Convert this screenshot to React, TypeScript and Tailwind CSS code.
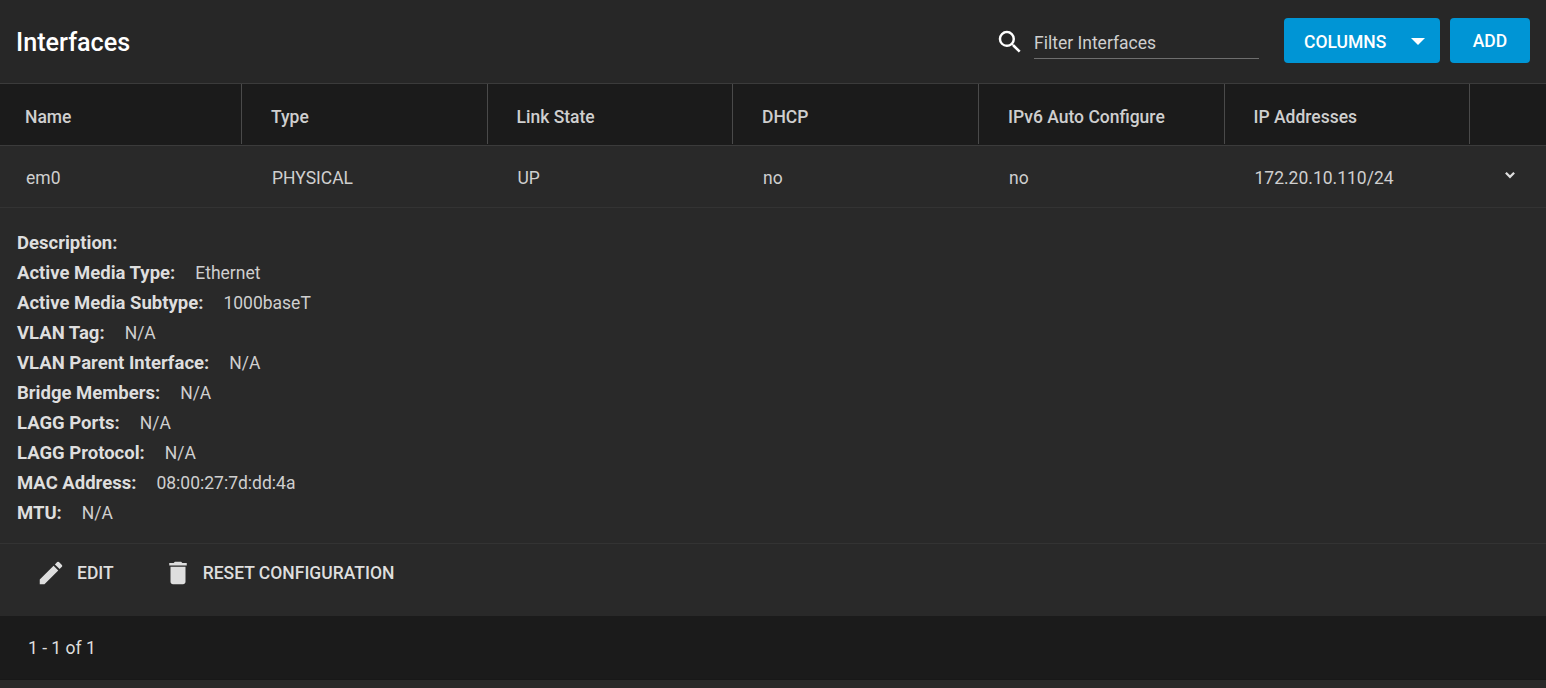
import React from 'react';

const headers = ['Name', 'Type', 'Link State', 'DHCP', 'IPv6 Auto Configure', 'IP Addresses'];
const cells = ['em0', 'PHYSICAL', 'UP', 'no', 'no', '172.20.10.110/24'];
const gridCols = 'grid grid-cols-[242px_245.5px_245.5px_246px_245.5px_245.5px_1fr]';

const details = [
  { label: 'Description:', value: '' },
  { label: 'Active Media Type:', value: 'Ethernet' },
  { label: 'Active Media Subtype:', value: '1000baseT' },
  { label: 'VLAN Tag:', value: 'N/A' },
  { label: 'VLAN Parent Interface:', value: 'N/A' },
  { label: 'Bridge Members:', value: 'N/A' },
  { label: 'LAGG Ports:', value: 'N/A' },
  { label: 'LAGG Protocol:', value: 'N/A' },
  { label: 'MAC Address:', value: '08:00:27:7d:dd:4a' },
  { label: 'MTU:', value: 'N/A' },
];

const App: React.FC = () => {
  return (
    <div className="h-[688px] overflow-hidden bg-[#292929] font-['Roboto',sans-serif] text-[#dedede]">
      {/* Toolbar */}
      <div className="flex h-[84px] items-center justify-between border-b border-[#3b3b3b] bg-[#272727] pl-[16px] pr-[16px]">
        <h1 className="mt-[2px] text-[25.2px] font-medium text-white">Interfaces</h1>
        <div className="mb-[2px] flex items-center">
          <svg width="30" height="30" viewBox="0 0 24 24" fill="#ffffff" className="mr-[9px] mt-[3px]">
            <path d="M15.5 14h-.79l-.28-.27A6.471 6.471 0 0 0 16 9.5 6.5 6.5 0 1 0 9.5 16c1.61 0 3.09-.59 4.23-1.57l.27.28v.79l5 4.99L20.49 19l-4.99-5zm-6 0C7.01 14 5 11.99 5 9.5S7.01 5 9.5 5 14 7.01 14 9.5 11.99 14 9.5 14z" />
          </svg>
          <div className="mr-[25px] mt-[4px] h-[32px] w-[225px] border-b border-[#6e6e6e] text-[17.5px] leading-[32px] text-[#cfcfcf]">
            Filter Interfaces
          </div>
          <button className="mr-[10px] flex h-[45px] w-[156px] items-center rounded-[4px] bg-[#0095d5] pl-[20px] text-[17.5px] font-medium text-white">
            <span className="mt-[4px]">COLUMNS</span>
            <svg width="14" height="7" viewBox="0 0 14 7" fill="#ffffff" className="ml-[25px] mt-[2px]">
              <path d="M0 0h14L7 7z" />
            </svg>
          </button>
          <button className="h-[45px] w-[80px] rounded-[4px] bg-[#0095d5] pt-[2px] text-[17.5px] font-medium text-white">ADD</button>
        </div>
      </div>

      {/* Table head */}
      <div className={`${gridCols} h-[62px] border-b border-[#3b3b3b] bg-[#1b1b1b]`}>
        {headers.map((h) => (
          <div key={h} className="flex h-[60px] items-center border-r border-[#4a4a4a] pl-[29px] pt-[6px] text-[17.5px] font-medium text-[#cfcfcf] first:pl-[25px]">
            {h}
          </div>
        ))}
        <div />
      </div>

      {/* Row */}
      <div className={`${gridCols} h-[62px] items-center border-b border-[#333333] pt-[4px] text-[17.5px] text-[#cfcfcf]`}>
        {cells.map((c, i) => (
          <div key={i} className="pl-[30px] first:pl-[26px]">
            {c}
          </div>
        ))}
        <div className="pl-[31px]">
          <svg width="18" height="18" viewBox="0 0 24 24" fill="none" stroke="#dedede" strokeWidth="3" className="mb-[8px]">
            <path d="M6.5 9l5.5 5.5L17.5 9" />
          </svg>
        </div>
      </div>

      {/* Expanded details */}
      <div className="h-[336px] border-b border-[#333333] pl-[17px] pt-[20px]">
        {details.map((d) => (
          <div key={d.label} className="flex h-[30px] items-baseline text-[17.5px] leading-[30px]">
            <span className="text-[18.5px] leading-[30px] font-bold">{d.label}</span>
            {d.value && <span className="ml-[20px] text-[#cfcfcf]">{d.value}</span>}
          </div>
        ))}
      </div>

      {/* Actions */}
      <div className="flex h-[72px] items-start pl-[36px] pt-[15px] text-[17.5px] font-medium text-[#dedede]">
        <button className="flex h-[27px] items-center">
          <svg width="30" height="30" viewBox="0 0 24 24" fill="#dedede">
            <path d="M3 17.25V21h3.75L17.81 9.94l-3.75-3.75L3 17.25zM20.71 7.04a1 1 0 0 0 0-1.41l-2.34-2.34a1 1 0 0 0-1.41 0l-1.83 1.83 3.75 3.75 1.83-1.83z" />
          </svg>
          <span className="ml-[11px] mt-[2px]">EDIT</span>
        </button>
        <button className="ml-[49px] flex h-[27px] items-center">
          <svg width="30" height="30" viewBox="0 0 24 24" fill="#dedede">
            <path d="M6 19c0 1.1.9 2 2 2h8c1.1 0 2-.9 2-2V7H6v12zM19 4h-3.5l-1-1h-5l-1 1H5v2h14V4z" />
          </svg>
          <span className="ml-[10px] mt-[2px]">RESET CONFIGURATION</span>
        </button>
      </div>

      {/* Footer */}
      <div className="flex h-[64px] items-center border-b border-[#181818] bg-[#1b1b1b] pl-[28px] pt-[2px] text-[17.5px] text-[#dedede]">
        1 - 1 of 1
      </div>
    </div>
  );
};

export default App;
